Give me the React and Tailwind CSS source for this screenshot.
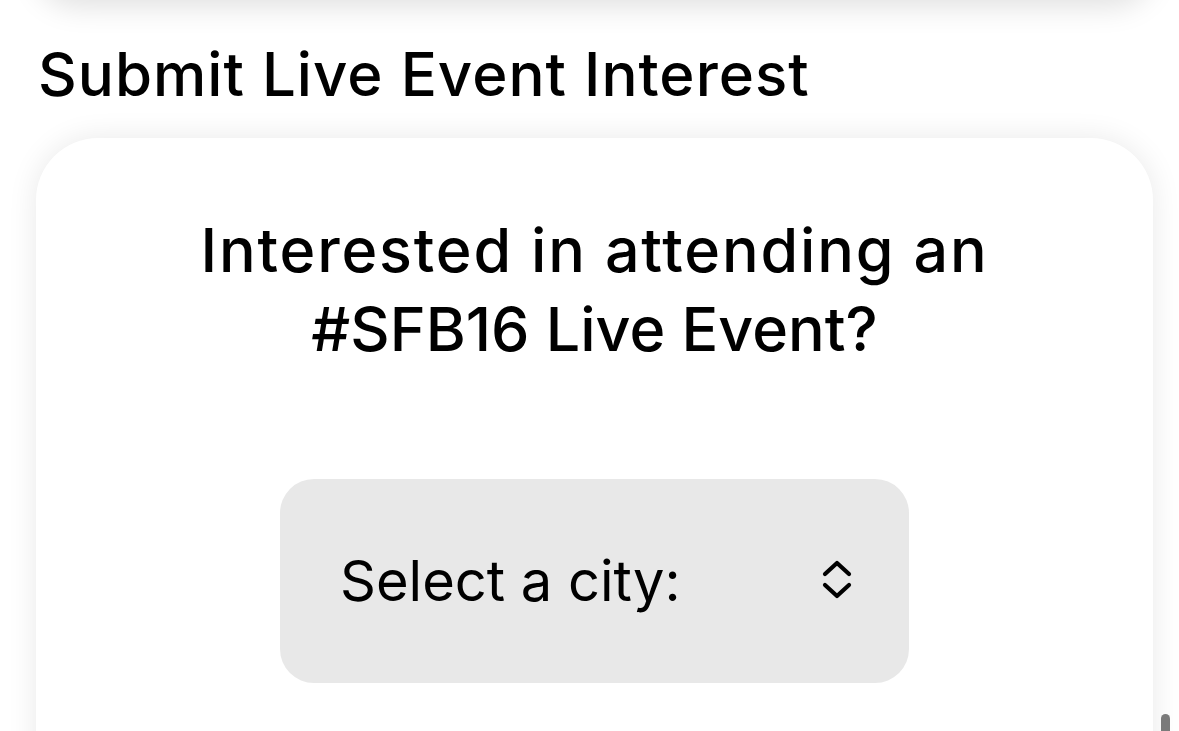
import React from 'react';

const font = { fontFamily: 'Inter, "Noto Sans", sans-serif' };

// chevron up/down glyph used by the native select
const UpDown = () => (
  <svg width="34" height="44" viewBox="0 0 34 44" fill="none" stroke="#000" strokeWidth="4.2" strokeLinecap="round" strokeLinejoin="round">
    <path d="M5 15 L17 4 L29 15" />
    <path d="M5 26 L17 37 L29 26" />
  </svg>
);

const App = () => {
  return (
    <div className="relative h-[731px] w-full overflow-hidden bg-white text-black" style={font}>
      {/* bottom edge of the previous card */}
      <div className="ml-[36px] mr-[26px] -mt-[40px] h-[40px] rounded-b-[60px] bg-white shadow-[0_6px_30px_rgba(0,0,0,0.13)]" />

      <h2 className="px-[38px] pt-[34px] text-[60px] font-medium leading-[80px] tracking-[0.017em]">
        Submit Live Event Interest
      </h2>

      <div className="ml-[36px] mr-[26px] mt-[24px] h-[700px] rounded-t-[62px] bg-white px-[30px] pt-[73px] shadow-[0_0_30px_rgba(0,0,0,0.09)]">
        <h3 className="text-center text-[61px] font-medium leading-[79px]">
          <span className="tracking-[0.03em]">Interested in attending an</span>
          <br />
          <span className="tracking-[0em]">#SFB16 Live Event?</span>
        </h3>

        <div className="mt-[110px] flex justify-center">
          <div className="flex h-[204px] w-[629px] items-center justify-between rounded-[34px] bg-[#e8e8e8] pl-[60px] pr-[55px]">
            <span className="text-[56px] leading-none">Select a city:</span>
            <UpDown />
          </div>
        </div>
      </div>

      {/* overlay scrollbar */}
      <div className="absolute right-[9px] top-[714px] h-[40px] w-[9px] rounded-full bg-[#7a7a7a]" />
    </div>
  );
};

export default App;
